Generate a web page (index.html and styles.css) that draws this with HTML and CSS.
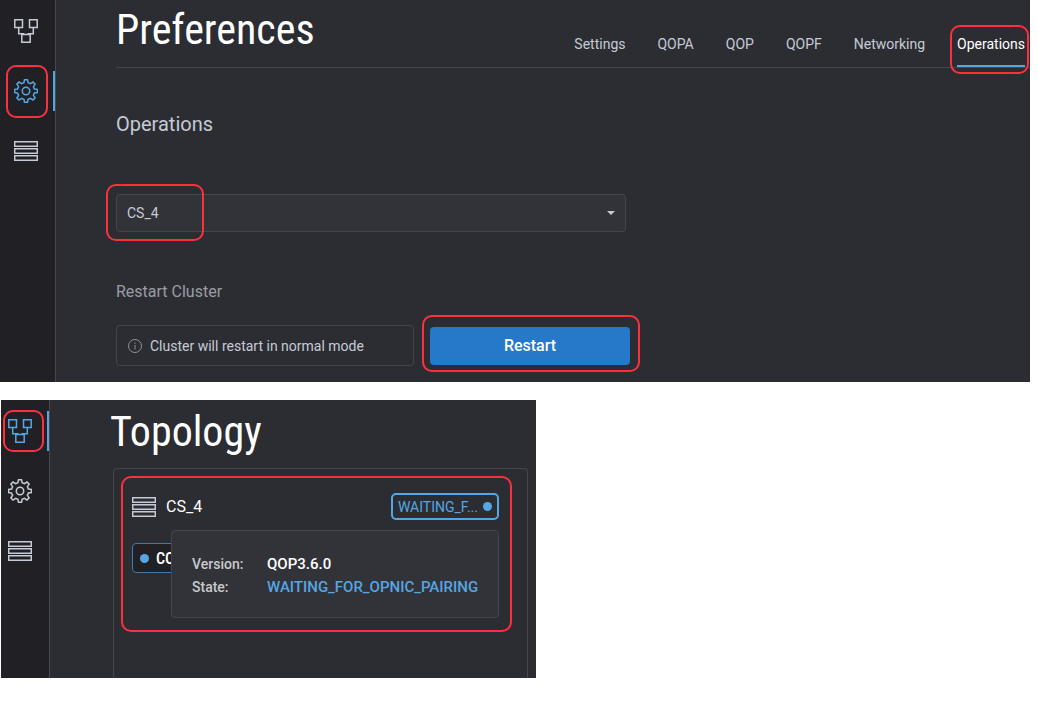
FILE: index.html
```html
<!DOCTYPE html>
<html lang="en">
<head>
    <meta charset="UTF-8">
    <title>Restart Cluster</title>
    <link rel="stylesheet" href="styles.css">
</head>
<body>
<svg class="sprite" aria-hidden="true">
    <symbol id="icon-topology" viewBox="0 0 24 24">
        <path d="M.8.8h7.700v7.700H.8zM15.500.8h7.700v7.700h-7.700zM7.800 15.500h8.400v7.700H7.800zM4.700 8.500v6.200h5v.8M19.300 8.500v6.200h-5v.8"/>
    </symbol>
    <symbol id="icon-gear" viewBox="0 0 24 24">
        <path d="M10.500 0.700h3l.6 3 2.300 1 2.600-1.700 2.100 2.100-1.700 2.600 1 2.300 3 .5v3l-3 .5-1 2.300 1.700 2.600-2.100 2.100-2.600-1.700-2.300 1-.6 3h-3l-.6-3-2.300-1L5 21.100 2.900 19l1.700-2.600-1-2.300-3-.6v-3l3-.5 1-2.300L2.900 5.100 5 3l2.600 1.700 2.300-1z"/>
        <circle cx="12" cy="12" r="3.700"/>
    </symbol>
    <symbol id="icon-list" viewBox="0 0 24 24">
        <path d="M.7 2.700h22.600v4.600H.7zM.7 9.700h22.600v4.600H.7zM.7 16.700h22.600v4.600H.7z"/>
    </symbol>
</svg>

<section class="window preferences">
    <nav class="sidebar">
        <a href="#topology" aria-label="Topology"><svg class="icon"><use href="#icon-topology"/></svg></a>
        <a href="#preferences" class="active" aria-label="Preferences"><svg class="icon"><use href="#icon-gear"/></svg></a>
        <a href="#clusters" aria-label="Clusters"><svg class="icon"><use href="#icon-list"/></svg></a>
    </nav>
    <main class="content">
        <header class="page-header">
            <h1>Preferences</h1>
            <nav class="tabs">
                <a href="#settings">Settings</a>
                <a href="#qopa">QOPA</a>
                <a href="#qop">QOP</a>
                <a href="#qopf">QOPF</a>
                <a href="#networking">Networking</a>
                <a href="#operations" class="active">Operations</a>
            </nav>
        </header>
        <h2>Operations</h2>
        <div class="select-box">
            <select id="cluster" aria-label="Cluster">
                <option>CS_4</option>
            </select>
        </div>
        <h3>Restart Cluster</h3>
        <div class="restart-row">
            <div class="info">
                <svg class="info-icon" viewBox="0 0 14 14" aria-hidden="true">
                    <circle cx="7" cy="7" r="6.500"/>
                    <path d="M7 6v4.500M7 3.500v1.300"/>
                </svg>
                <span>Cluster will restart in normal mode</span>
            </div>
            <div class="restart">
                <button type="button">Restart</button>
            </div>
        </div>
    </main>
</section>

<section class="window topology">
    <nav class="sidebar">
        <a href="#topology" class="active" aria-label="Topology"><svg class="icon"><use href="#icon-topology"/></svg></a>
        <a href="#preferences" aria-label="Preferences"><svg class="icon"><use href="#icon-gear"/></svg></a>
        <a href="#clusters" aria-label="Clusters"><svg class="icon"><use href="#icon-list"/></svg></a>
    </nav>
    <div class="content">
        <h1>Topology</h1>
        <div class="card">
            <div class="cluster">
                <div class="cluster-head">
                    <svg class="icon"><use href="#icon-list"/></svg>
                    <span class="cluster-name">CS_4</span>
                    <span class="badge">WAITING_F... <i class="dot"></i></span>
                </div>
                <div class="chip"><i class="dot"></i>CO</div>
                <dl class="tooltip">
                    <dt>Version:</dt>
                    <dd>QOP3.6.0</dd>
                    <dt>State:</dt>
                    <dd class="waiting">WAITING_FOR_OPNIC_PAIRING</dd>
                </dl>
            </div>
        </div>
    </div>
</section>
</body>
</html>
```

FILE: styles.css
```css
* {
    box-sizing: border-box;
}
body {
    margin: 0;
    background: #fff;
    font-family: Roboto, "Liberation Sans", sans-serif;
    font-size: 14px;
    color: #c5cbd6;
}
h1, h2, h3, dl, dd {
    margin: 0;
    font-weight: 400;
}
a {
    color: inherit;
    text-decoration: none;
}
.sprite {
    display: none;
}
.window {
    display: flex;
    background: #2c2d32;
}
.preferences {
    margin-right: 8px;
}
.topology {
    max-width: 535px;
    margin: 18px 0 0 1px;
}

/* sidebar */
.sidebar {
    flex: none;
    width: 56px;
    padding-top: 11px;
    background: #212125;
    border-right: 1px solid #47484e;
}
.topology .sidebar {
    width: 49px;
}
.sidebar a {
    position: relative;
    display: flex;
    align-items: center;
    height: 40px;
    padding-left: 14px;
    margin-bottom: 20px;
}
.topology .sidebar a {
    padding-left: 7px;
}
.sidebar a.active {
    color: #55a6e3;
    border-right: 2px solid #55a6e3;
}
.icon {
    width: 24px;
    height: 24px;
    fill: none;
    stroke: currentColor;
    stroke-width: 1.5;
}

/* red highlights */
.sidebar .active::before,
.tabs .active::before,
.select-box::before,
.restart::before {
    content: "";
    position: absolute;
    border: 2px solid #fc3140;
    border-radius: 10px;
    pointer-events: none;
}
.sidebar .active::before {
    inset: -6px 5px -7px 6px;
}
.topology .sidebar .active::before {
    inset: -1px 3px -1px 2px;
}
.tabs .active::before {
    inset: -1px -4px -9px -7px;
}
.select-box::before {
    inset: -10px auto -9px -10px;
    width: 94px;
}
.restart::before {
    inset: -12px -10px -7px -8px;
}

/* preferences */
.content {
    flex: 1;
    min-width: 0;
}
.preferences .content {
    padding: 0 0 16px 60px;
}
h1 {
    font-family: "Roboto Condensed", "Liberation Sans Narrow", Roboto, sans-serif;
    font-size: 42px;
    line-height: 60px;
    color: #fff;
}
.page-header {
    display: flex;
    justify-content: space-between;
    align-items: flex-end;
    height: 68px;
    padding-right: 5px;
    border-bottom: 1px solid #45464b;
}
.page-header h1 {
    align-self: flex-start;
}
.tabs {
    display: flex;
    gap: 32px;
}
.tabs a {
    position: relative;
    height: 41px;
    line-height: 36px;
}
.tabs .active {
    color: #fff;
    border-bottom: 2px solid #55a6e3;
}
h2 {
    margin-top: 44px;
    font-size: 20px;
    line-height: 24px;
}
.select-box {
    position: relative;
    max-width: 510px;
    margin-top: 58px;
}
.select-box select {
    display: block;
    width: 100%;
    height: 38px;
    padding: 0 10px;
    appearance: none;
    background: #323338;
    border: 1px solid #45464b;
    border-radius: 4px;
    color: inherit;
    font: inherit;
}
.select-box::after {
    content: "";
    position: absolute;
    top: 17px;
    right: 11px;
    border: 4px solid transparent;
    border-top-color: #c5cbd6;
    border-bottom: 0;
    pointer-events: none;
}
h3 {
    margin-top: 50px;
    font-size: 16px;
    line-height: 20px;
    color: #9a9da4;
}
.restart-row {
    display: flex;
    align-items: center;
    gap: 16px;
    margin-top: 23px;
}
.info {
    display: flex;
    align-items: center;
    gap: 8px;
    width: 298px;
    height: 41px;
    padding: 0 11px;
    border: 1px solid #45464b;
    border-radius: 4px;
}
.info-icon {
    width: 14px;
    height: 14px;
    fill: none;
    stroke: #8d9096;
}
.restart {
    position: relative;
}
.restart button {
    display: block;
    width: 200px;
    height: 38px;
    background: #2678c8;
    border: none;
    border-radius: 4px;
    color: #fff;
    font: 500 16px Roboto, sans-serif;
    cursor: pointer;
}

/* topology */
.topology .content {
    padding: 2px 8px 0 60px;
}
.topology h1 {
    margin-bottom: 6px;
}
.card {
    margin-left: 3px;
    padding: 7px 15px 46px 7px;
    border: 1px solid #45464b;
    border-bottom: none;
    border-radius: 4px 4px 0 0;
}
.cluster {
    position: relative;
    padding: 15px 11px 57px 9px;
    border: 2px solid #fc3140;
    border-radius: 10px;
}
.cluster-head {
    display: flex;
    align-items: center;
    gap: 10px;
}
.cluster-name {
    flex: 1;
    font-size: 16px;
    color: #fff;
}
.badge {
    display: flex;
    align-items: center;
    gap: 5px;
    height: 27px;
    padding: 0 5px;
    border: 2px solid #55a6e3;
    border-radius: 5px;
    color: #55a6e3;
}
.dot {
    width: 9px;
    height: 9px;
    border-radius: 50%;
    background: #55a6e3;
}
.chip {
    display: flex;
    align-items: center;
    gap: 7px;
    width: 80px;
    height: 30px;
    margin-top: 23px;
    padding: 0 7px;
    background: #212125;
    border: 1px solid #3f7cab;
    border-radius: 4px;
    color: #fff;
    font: 500 16px "Roboto Condensed", Roboto, sans-serif;
}
.tooltip {
    position: absolute;
    top: 52px;
    right: 11px;
    display: grid;
    grid-template-columns: 75px auto;
    align-content: start;
    width: 328px;
    height: 88px;
    padding: 22px 0 0 20px;
    background: #323338;
    border: 1px solid #45464b;
    border-radius: 4px;
    line-height: 23px;
    font-weight: 500;
    color: #c8c9cc;
}
.tooltip dd {
    color: #fff;
    font-size: 15px;
    font-weight: 500;
}
.tooltip .waiting {
    color: #55a6e3;
}
```
